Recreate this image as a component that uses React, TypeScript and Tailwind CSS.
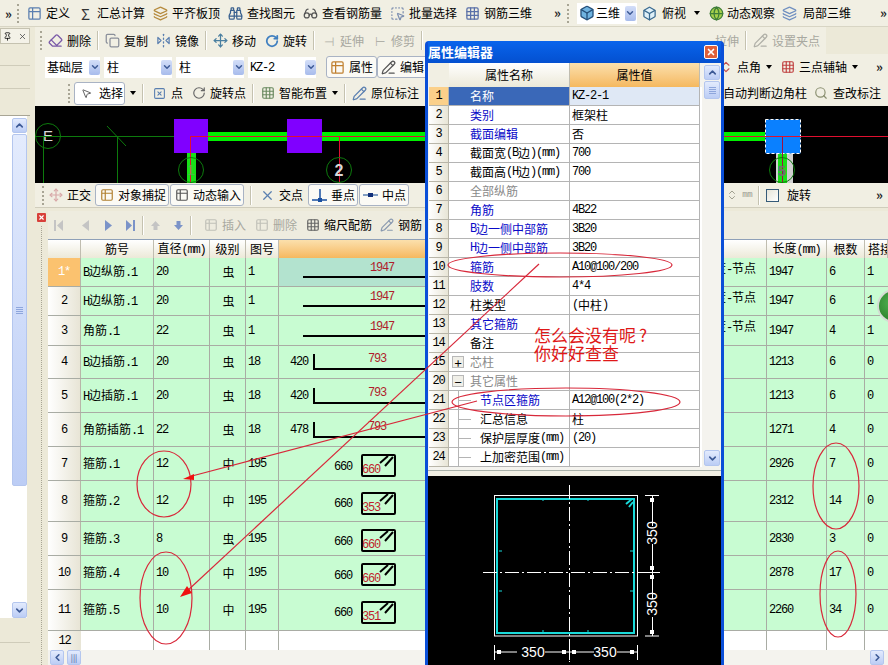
import type { ReactNode } from "react";
import {
  Binoculars,
  Box,
  ChevronDown,
  ChevronLeft,
  ChevronRight,
  ChevronUp,
  ChevronsUpDown,
  Copy,
  Eraser,
  FlipHorizontal2,
  Glasses,
  Globe,
  Grid3x3,
  Layers,
  MousePointer2,
  Move,
  PencilLine,
  Pin,
  RotateCw,
  Search,
  SquareDashedMousePointer,
  SquareX,
  Table2,
  X,
} from "lucide-react";

// ascii runs get the narrow mono look, cjk stays on the cjk font
const T = ({ s }: { s: string }) => (
  <>
    {s.split(/([\x00-\x7f]+)/).map((p, i) =>
      /^[\x00-\x7f]+$/.test(p) ? (
        <span key={i} className="[font-family:'Liberation_Mono',monospace] tracking-[-1.2px]">
          {p}
        </span>
      ) : (
        <span key={i}>{p}</span>
      )
    )}
  </>
);

const Grip = () => (
  <div className="mx-[3px] h-[19px] w-[2px] shrink-0 border-l-2 border-dotted border-[#a8a595]" />
);
const Sep = () => <div className="mx-[6px] h-[19px] w-[2px] shrink-0 border-l border-r border-l-[#c5c2b0] border-r-white" />;
const More = () => <span className="shrink-0 text-[13px] font-bold leading-none text-[#222]">»</span>;
const Caret = ({ className }: { className?: string }) => (
  <span className={`h-0 w-0 shrink-0 border-x-[3px] border-t-[4px] border-x-transparent border-t-black ${className ?? "ml-[5px]"}`} />
);

const ComboArrow = () => (
  <span className="flex h-[15px] w-[11px] shrink-0 items-center justify-center rounded-[2px] bg-gradient-to-b from-[#d3def8] to-[#a8bcec]">
    <ChevronDown size={10} strokeWidth={3.5} className="text-[#3d5a96]" />
  </span>
);

const Tool = ({
  icon,
  label,
  gray,
  className,
}: {
  icon: ReactNode;
  label: string;
  gray?: boolean;
  className?: string;
}) => (
  <div className={`flex shrink-0 items-center gap-[4px] ${gray ? "text-[#a8a8a0]" : "text-black"} ${className ?? ""}`}>
    <span className="flex h-[16px] w-[15px] shrink-0 items-center justify-center">{icon}</span>
    <span className="whitespace-nowrap">{label}</span>
  </div>
);

const Pressed = ({ icon, label, className }: { icon: ReactNode; label: string; className?: string }) => (
  <div className={`flex h-[22px] shrink-0 items-center gap-[4px] rounded-[3px] border border-[#a9b3c4] bg-[#fbfaf5] px-[3px] ${className ?? ""}`}>
    <span className="flex h-[16px] w-[15px] shrink-0 items-center justify-center">{icon}</span>
    <span className="whitespace-nowrap">{label}</span>
  </div>
);

const Combo = ({ label, w, labelCls }: { label: string; w: string; labelCls?: string }) => (
  <div className={`flex h-[21px] shrink-0 items-center justify-between bg-white pl-[2px] ${w}`}>
    <span className={labelCls}>
      <T s={label} />
    </span>
    <ComboArrow />
  </div>
);

const ScrollBtn = ({ children, className }: { children: ReactNode; className?: string }) => (
  <div className={`flex items-center justify-center rounded-[2px] border border-[#b4c6ee] bg-gradient-to-b from-[#e3ebfd] to-[#bccdf5] text-[#3d5a96] ${className ?? ""}`}>
    {children}
  </div>
);

const Lines = () => (
  <div className="flex flex-col gap-[1px]">
    <span className="h-[1px] w-[7px] bg-[#8ea6dc]" />
    <span className="h-[1px] w-[7px] bg-[#8ea6dc]" />
    <span className="h-[1px] w-[7px] bg-[#8ea6dc]" />
    <span className="h-[1px] w-[7px] bg-[#8ea6dc]" />
  </div>
);

const TopBar = () => (
  <div className="flex h-[27px] shrink-0 items-center border-b border-[#d8d5c4] bg-[#f1efe3] pl-[5px]">
    <More />
    <div className="ml-[2px] mr-[5px]"><Grip /></div>
    <div className="flex items-center gap-2">
      <Tool icon={<Table2 size={15} className="text-[#5a7fb0]" />} label="定义" />
      <Tool icon={<span className="text-[15px] leading-none text-[#333]">Σ</span>} label="汇总计算" />
      <Tool icon={<Layers size={15} className="text-[#b58a3c]" />} label="平齐板顶" />
      <Tool icon={<Binoculars size={15} className="text-[#38608f]" />} label="查找图元" />
      <Tool icon={<Glasses size={15} className="text-[#555]" />} label="查看钢筋量" />
      <Tool icon={<SquareDashedMousePointer size={15} className="text-[#7d8fb0]" />} label="批量选择" />
      <Tool icon={<Grid3x3 size={15} className="text-[#5a70a8]" />} label="钢筋三维" />
    </div>
    <div className="ml-[22px]"><More /></div>
    <div className="ml-[3px] mr-[1px]"><Grip /></div>
    <div className="ml-[4px] flex h-[21px] items-center bg-white pl-[2px] pr-[1px]">
      <Box size={16} fill="#6fb3e0" className="text-[#25507a]" />
      <span className="ml-[1px] mr-[5px]">三维</span>
      <ComboArrow />
    </div>
    <Box size={15} fill="#dff0f8" className="ml-[5px] text-[#3a6a90]" />
    <span className="ml-[5px]">俯视</span>
    <Caret className="ml-[8px]" />
    <Globe size={15} fill="#a6d04a" className="ml-[9px] text-[#3f7d3a]" />
    <span className="ml-[3px] whitespace-nowrap">动态观察</span>
    <Layers size={15} className="ml-[7px] text-[#6f8fc0]" />
    <span className="ml-[6px] whitespace-nowrap">局部三维</span>
    <div className="ml-[29px]"><More /></div>
  </div>
);

const EditBar = () => (
  <div className="flex h-[27px] shrink-0 items-center">
    <div className="flex h-full w-[791px] items-center bg-[#f1efe3] pl-[2px]">
      <Grip />
      <div className="ml-[3px] flex items-center">
        <Tool icon={<Eraser size={15} className="text-[#7a5aa8]" />} label="删除" />
        <Sep />
        <Tool icon={<Copy size={15} className="text-[#8a8f9a]" />} label="复制" />
        <Tool className="ml-2" icon={<FlipHorizontal2 size={15} className="text-[#5a7fb0]" />} label="镜像" />
        <Sep />
        <Tool icon={<Move size={15} className="text-[#4a7fa0]" />} label="移动" />
        <Tool className="ml-2" icon={<RotateCw size={14} strokeWidth={3} className="text-[#3f7fc0]" />} label="旋转" />
        <Sep />
        <Tool gray icon={<span className="text-[#b0b0a8]">⊣</span>} label="延伸" />
        <Tool gray className="ml-2" icon={<span className="text-[#b0b0a8]">⊢</span>} label="修剪" />
        <Sep />
      </div>
      <div className="ml-auto flex items-center">
        <span className="text-[#a8a8a0]">拉伸</span>
        <Sep />
        <Tool gray icon={<PencilLine size={15} className="text-[#b0b0a8]" />} label="设置夹点" className="mr-[6px]" />
      </div>
    </div>
  </div>
);

const PropBar = () => (
  <div className="flex h-[26px] shrink-0 items-center justify-between bg-[#f1efe3]">
    <div className="flex items-center gap-[4px] pl-[10px]">
      <Combo label="基础层" w="w-[55px]" />
      <Combo label="柱" w="w-[68px]" labelCls="ml-[1px]" />
      <Combo label="柱" w="w-[68px]" labelCls="ml-[1px]" />
      <Combo label="KZ-2" w="w-[68px]" />
      <div className="ml-[1px]"><Sep /></div>
      <Pressed className="-ml-[13px]" icon={<Table2 size={15} className="text-[#c08030]" />} label="属性" />
      <Pressed className="-ml-[4px]" icon={<PencilLine size={15} className="text-[#555]" />} label="编辑" />
    </div>
    <div className="flex items-center pr-[5px]">
      <Tool icon={<ChevronsUpDown size={14} className="text-[#c05050]" />} label="点角" />
      <Caret />
      <Tool className="ml-[8px]" icon={<Grid3x3 size={14} className="text-[#c04040]" />} label="三点辅轴" />
      <Caret />
      <div className="ml-[18px]"><More /></div>
    </div>
  </div>
);

const DrawBar = () => (
  <div className="flex h-[26px] shrink-0 items-center justify-between bg-[#f1efe3] pl-[30px]">
    <div className="flex items-center">
      <Grip />
      <div className="ml-[1px] flex h-[23px] w-[51px] items-center gap-[7px] rounded-[3px] border border-[#a9b3c4] bg-white pl-[6px]">
        <MousePointer2 size={11} className="text-[#555]" />
        <span>选择</span>
      </div>
      <Caret />
      <Sep />
      <Tool className="ml-[2px]" icon={<SquareX size={13} className="text-[#5a7fb0]" />} label="点" />
      <Tool className="ml-[8px]" icon={<RotateCw size={14} className="text-[#666]" />} label="旋转点" />
      <Sep />
      <Tool icon={<Grid3x3 size={14} className="text-[#6a8a60]" />} label="智能布置" />
      <Caret />
      <Sep />
      <Tool icon={<PencilLine size={15} className="text-[#5a7fb0]" />} label="原位标注" />
      <Sep />
    </div>
    <div className="flex items-center pr-[7px]">
      <span className="whitespace-nowrap">自动判断边角柱</span>
      <Tool className="ml-[7px]" icon={<Search size={14} className="text-[#8a8f70]" />} label="查改标注" />
    </div>
  </div>
);

const CadView = () => (
  <div className="h-[77px] shrink-0 bg-black">
    <svg width="853" height="77" viewBox="35 106 853 77">
      <circle cx="48" cy="136" r="12.5" fill="none" stroke="#0d7a0d" />
      <text x="48" y="141" textAnchor="middle" fontSize="15" fill="#d8d8d8" fontFamily="Liberation Sans">E</text>
      <line x1="35" y1="136.5" x2="190" y2="136.5" stroke="#0d7a0d" />
      <line x1="43.5" y1="136" x2="43.5" y2="183" stroke="#0d7a0d" />
      <line x1="117.5" y1="136" x2="117.5" y2="183" stroke="#0d7a0d" />
      <line x1="107" y1="126" x2="126" y2="146" stroke="#0d7a0d" />
      <rect x="187" y="153" width="9" height="30" fill="#18e018" />
      <rect x="174" y="119" width="34" height="34" fill="#8000ff" />
      <rect x="287" y="119" width="35" height="34" fill="#8000ff" />
      <rect x="208" y="132" width="79" height="9" fill="#00f000" />
      <rect x="322" y="132" width="110" height="9" fill="#00f000" />
      <rect x="700" y="132" width="65" height="9" fill="#00f000" />
      <line x1="190" y1="136.5" x2="430" y2="136.5" stroke="#e01030" />
      <line x1="190.5" y1="137" x2="190.5" y2="183" stroke="#e01030" />
      <line x1="339.5" y1="137" x2="339.5" y2="183" stroke="#e01030" />
      <circle cx="191" cy="170" r="12.5" fill="none" stroke="#0d7a0d" />
      <text x="191" y="175" textAnchor="middle" fontSize="15" fill="#50b050" fontFamily="Liberation Sans">1</text>
      <circle cx="339" cy="170" r="12.5" fill="none" stroke="#0d7a0d" />
      <text x="339" y="176" textAnchor="middle" fontSize="16" fontWeight="bold" fill="#d8d8d8" fontFamily="Liberation Sans">2</text>
      <rect x="776" y="153" width="17" height="30" fill="#d0d0d0" />
      <rect x="778" y="153" width="9" height="30" fill="#18e018" />
      <rect x="765.5" y="119.5" width="35" height="34" fill="#0a80ff" stroke="#ffffff" strokeDasharray="3 2" />
      <line x1="724" y1="136.5" x2="888" y2="136.5" stroke="#e01030" />
      <line x1="782.5" y1="137" x2="782.5" y2="183" stroke="#a01040" />
      <circle cx="782" cy="170" r="12.5" fill="none" stroke="#0d7a0d" />
      <text x="782" y="176" textAnchor="middle" fontSize="15" fontWeight="bold" fill="#707070" fontFamily="Liberation Sans">5</text>
    </svg>
  </div>
);

const SnapBar = () => (
  <div className="flex h-[25px] shrink-0 items-center justify-between border-b border-[#d0cdbc] bg-[#f1efe3] pl-[4px]">
    <div className="flex items-center">
      <Grip />
      <Tool className="ml-[1px]" gray={false} icon={<Move size={14} className="text-[#d8a8a8]" />} label="正交" />
      <Pressed className="ml-[4px] w-[74px]" icon={<Table2 size={14} className="text-[#b08030]" />} label="对象捕捉" />
      <Pressed className="ml-[1px] w-[74px]" icon={<Table2 size={14} className="text-[#555]" />} label="动态输入" />
      <Sep />
      <Tool className="ml-[2px]" icon={<X size={15} className="text-[#5a7fb0]" />} label="交点" />
      <Pressed
        className="ml-[5px] w-[50px]"
        icon={
          <svg width="15" height="14" viewBox="0 0 15 14">
            <path d="M0 12h15M8 1v11" stroke="#1a4fa0" strokeWidth="1.500" />
            <path d="M6 10h4v4H6z" fill="#1a4fa0" />
          </svg>
        }
        label="垂点"
      />
      <Pressed
        className="ml-[1px] w-[50px]"
        icon={
          <svg width="15" height="14" viewBox="0 0 15 14">
            <path d="M0 7h15" stroke="#5a7fb0" strokeWidth="1.500" />
            <path d="M5 5h5v4H5z" fill="#12307a" />
          </svg>
        }
        label="中点"
      />
    </div>
    <div className="flex items-center pr-[5px]">
      <span className="text-[#a8a8a0]"><T s="0" /></span>
      <ChevronsUpDown size={12} className="ml-[5px] text-[#a0a090]" />
      <span className="ml-[4px] text-[9px] tracking-[-0.5px] text-[#9a9a90] [font-family:'Liberation_Mono',monospace]">mm</span>
      <Sep />
      <span className="h-[13px] w-[13px] border border-[#355a78] bg-gradient-to-br from-[#e6e4d8] to-white" />
      <span className="ml-[8px]">旋转</span>
      <div className="ml-[65px]"><More /></div>
    </div>
  </div>
);

const LeftPanel = () => (
  <div className="flex w-[35px] shrink-0 flex-col bg-[#ece9d8]">
    <div className="mt-[1px] flex h-[16px] w-[30px] items-center justify-between border border-[#c5c2b0] bg-[#f4f2e8] px-[2px]">
      <Pin size={9} className="text-black" />
      <X size={9} className="text-[#444]" />
    </div>
    <div className="h-[22px] w-[30px] border-b border-[#cfccba]" />
    <div className="h-[23px] w-[30px] border-b border-[#cfccba]" />
    <div className="h-[27px] w-[30px] border-b border-[#a8a595]" />
    <div className="flex h-[502px] w-[30px] justify-end border-r-[3px] border-[#ece9d8] bg-white pt-[2px]">
      <div className="flex w-[15px] flex-col gap-[1px]">
        <ScrollBtn className="h-[15px]"><ChevronUp size={11} strokeWidth={3.5} /></ScrollBtn>
        <ScrollBtn className="h-[352px]"><Lines /></ScrollBtn>
        <div className="flex-1" />
        <ScrollBtn className="h-[16px]"><ChevronDown size={11} strokeWidth={3.5} /></ScrollBtn>
      </div>
    </div>
    <div className="mt-[4px] h-[21px] w-[30px] border-b border-[#cfccba]" />
  </div>
);

const Nav = ({ d, c }: { d: string; c: string }) => (
  <svg width="11" height="13" viewBox="0 0 11 13"><path d={d} fill={c} /></svg>
);

const GridBar = () => (
  <div className="flex h-[28px] shrink-0 items-center bg-[#eeecdf] pl-[5px] text-[#a8a8a0]">
    <Nav d="M1 1h2v11H1zM10 1v11L4 6.5z" c="#c4c4c4" />
    <div className="ml-[16px]"><Nav d="M9 1v11L2 6.5z" c="#c4c4c4" /></div>
    <div className="ml-[12px]"><Nav d="M2 1v11l7-5.5z" c="#7b93c8" /></div>
    <div className="ml-[11px]"><Nav d="M1 1v11l6-5.5zM8 1h2v11H8z" c="#7b93c8" /></div>
    <Sep />
    <Nav d="M5.5 2 10 7H7.500v4h-4V7H1z" c="#c4c4c4" />
    <div className="ml-[12px]"><Nav d="M3.500 2h4v4H10l-4.500 5L1 6h2.500z" c="#7b93c8" /></div>
    <Sep />
    <Tool gray icon={<Table2 size={14} className="text-[#c0c0b8]" />} label="插入" className="ml-[5px]" />
    <Tool gray icon={<Table2 size={14} className="text-[#c0c0b8]" />} label="删除" className="ml-[8px]" />
    <Tool icon={<Grid3x3 size={14} className="text-[#666]" />} label="缩尺配筋" className="ml-[8px]" />
    <Tool icon={<PencilLine size={14} className="text-[#8a9ab0]" />} label="钢筋" className="ml-[7px]" />
  </div>
);

const colsCls =
  "grid grid-cols-[33px_73px_56px_36px_33px_321px_167px_60px_38px_23px]";

const Th = ({ s, orange, left }: { s: string; orange?: boolean; left?: boolean }) => (
  <div
    className={`flex items-center overflow-hidden border-r border-[#c0bdb0] bg-gradient-to-b ${left ? "justify-start pl-[3px]" : "justify-center"} ${
      orange ? "from-[#fbe0ac] to-[#f5b85e]" : "from-white to-[#ece9d8]"
    }`}
  >
    <span className="whitespace-nowrap"><T s={s} /></span>
  </div>
);

type Shape =
  | { kind: "bar"; v: string; active?: boolean }
  | { kind: "hook"; left: string; v: string }
  | { kind: "box"; v: string };

type Row = {
  n: string;
  name: string;
  d: string;
  g: string;
  fig: string;
  shape: Shape;
  node?: boolean;
  len: string;
  cnt: string;
  lap: string;
  h: string;
};

const rows: Row[] = [
  { n: "1*", name: "B边纵筋.1", d: "20", g: "虫", fig: "1", shape: { kind: "bar", v: "1947", active: true }, node: true, len: "1947", cnt: "6", lap: "1", h: "h-[29px]" },
  { n: "2", name: "H边纵筋.1", d: "20", g: "虫", fig: "1", shape: { kind: "bar", v: "1947" }, node: true, len: "1947", cnt: "6", lap: "1", h: "h-[29px]" },
  { n: "3", name: "角筋.1", d: "22", g: "虫", fig: "1", shape: { kind: "bar", v: "1947" }, node: true, len: "1947", cnt: "4", lap: "1", h: "h-[30px]" },
  { n: "4", name: "B边插筋.1", d: "20", g: "虫", fig: "18", shape: { kind: "hook", left: "420", v: "793" }, len: "1213", cnt: "6", lap: "0", h: "h-[33px]" },
  { n: "5", name: "H边插筋.1", d: "20", g: "虫", fig: "18", shape: { kind: "hook", left: "420", v: "793" }, len: "1213", cnt: "6", lap: "0", h: "h-[34px]" },
  { n: "6", name: "角筋插筋.1", d: "22", g: "虫", fig: "18", shape: { kind: "hook", left: "478", v: "793" }, len: "1271", cnt: "4", lap: "0", h: "h-[34px]" },
  { n: "7", name: "箍筋.1", d: "12", g: "中", fig: "195", shape: { kind: "box", v: "660" }, len: "2926", cnt: "7", lap: "0", h: "h-[34px]" },
  { n: "8", name: "箍筋.2", d: "12", g: "中", fig: "195", shape: { kind: "box", v: "353" }, len: "2312", cnt: "14", lap: "0", h: "h-[41px]" },
  { n: "9", name: "箍筋.3", d: "8", g: "虫", fig: "195", shape: { kind: "box", v: "660" }, len: "2830", cnt: "3", lap: "0", h: "h-[34px]" },
  { n: "10", name: "箍筋.4", d: "10", g: "中", fig: "195", shape: { kind: "box", v: "660" }, len: "2878", cnt: "17", lap: "0", h: "h-[34px]" },
  { n: "11", name: "箍筋.5", d: "10", g: "中", fig: "195", shape: { kind: "box", v: "351" }, len: "2260", cnt: "34", lap: "0", h: "h-[41px]" },
];

const ShapeCell = ({ shape }: { shape: Shape }) => {
  if (shape.kind === "bar")
    return (
      <div className={`flex h-full flex-col justify-end pb-[8px] pl-[24px] ${shape.active ? "bg-[#b3e3cf]" : ""}`}>
        <div className="mb-[1px] pl-[67px] leading-[13px] text-[#b01c2c]"><T s={shape.v} /></div>
        <div className="h-[2px] bg-black" />
      </div>
    );
  if (shape.kind === "hook")
    return (
      <div className="flex h-full items-end pb-[8px] pl-[11px]">
        <div className="mb-[1px] w-[23px] leading-[14px]"><T s={shape.left} /></div>
        <div className="h-[16px] flex-1 border-b-[2px] border-l-[2px] border-black pl-[53px] leading-[6px] text-[#b01c2c]">
          <T s={shape.v} />
        </div>
      </div>
    );
  return (
    <div className="flex h-full items-center gap-[9px] pl-[55px]">
      <span className="translate-y-[2px]"><T s="660" /></span>
      <div className="relative h-[23px] w-[35px] translate-y-[2px] rounded-[2px] border-[2px] border-black">
        <span className="absolute -left-[1px] bottom-[-2px] leading-[14px] text-[#c01c2c]"><T s={shape.v} /></span>
        <svg className="absolute right-[0px] top-[0px]" width="15" height="12" viewBox="0 0 15 12">
          <path d="M1 7 9 0M6 10 14 1" stroke="#000" strokeWidth="2" fill="none" />
        </svg>
      </div>
    </div>
  );
};

const Td = ({ children, className }: { children?: ReactNode; className?: string }) => (
  <div className={`flex items-center overflow-hidden border-r border-[#a9aca4] pl-[2px] ${className ?? ""}`}>{children}</div>
);

const RebarGrid = () => (
  <div className="relative flex-1 overflow-hidden bg-white">
    <div className={`${colsCls} h-[19px] border-t border-[#8ea0b8]`}>
      <Th s="" />
      <Th s="筋号" />
      <Th s="直径(mm)" />
      <Th s="级别" />
      <Th s="图号" />
      <Th s="图形" orange />
      <Th s="公式" />
      <Th s="长度(mm)" />
      <Th s="根数" />
      <Th s="搭接" left />
    </div>
    {rows.map((r) => (
      <div key={r.n} className={`${colsCls} ${r.h} border-b border-[#a9aca4] bg-[#c8fcd2]`}>
        <div
          className={`flex items-center justify-center border-r border-[#b8b5a8] ${
            r.n === "1*" ? "bg-[#fbc26f] text-white" : "bg-gradient-to-r from-white to-[#e8e5d6]"
          }`}
        >
          <T s={r.n} />
        </div>
        <Td><span className="whitespace-nowrap"><T s={r.name} /></span></Td>
        <Td><T s={r.d} /></Td>
        <Td className="justify-center pl-0">{r.g}</Td>
        <Td><T s={r.fig} /></Td>
        <div className="border-r border-[#a9aca4]"><ShapeCell shape={r.shape} /></div>
        <Td className="items-start justify-end pr-[10px] pt-[3px]">
          {r.node && <span className="whitespace-nowrap">度<T s="-" />节点</span>}
        </Td>
        <Td><T s={r.len} /></Td>
        <Td><T s={r.cnt} /></Td>
        <Td className="border-r-0"><T s={r.lap} /></Td>
      </div>
    ))}
    <div className={`${colsCls} h-[19px]`}>
      <div className="flex items-center justify-center bg-gradient-to-r from-white to-[#e8e5d6]"><T s="12" /></div>
      <div className="border-r border-[#a9aca4]" />
      <div className="border-r border-[#a9aca4]" />
      <div className="border-r border-[#a9aca4]" />
      <div className="border-r border-[#a9aca4]" />
      <div className="border-r border-[#a9aca4]" />
      <div className="border-r border-[#a9aca4]" />
      <div className="border-r border-[#a9aca4]" />
      <div className="border-r border-[#a9aca4]" />
      <div />
    </div>
    <div className="flex h-[15px] items-center gap-[3px] bg-[#f4f3ee] pl-[2px] pr-[4px]">
      <ScrollBtn className="h-[15px] w-[14px]"><ChevronLeft size={11} strokeWidth={3.5} /></ScrollBtn>
      <ScrollBtn className="h-[15px] w-[14px]"><span className="text-[8px] leading-none">|||</span></ScrollBtn>
      <ScrollBtn className="ml-auto h-[15px] w-[14px]"><ChevronRight size={11} strokeWidth={3.5} /></ScrollBtn>
    </div>
  </div>
);

const BottomPanel = () => (
  <div className="flex min-h-0 flex-1 bg-[#ece9d8] pt-[3px]">
    <div className="flex w-[13px] shrink-0 flex-col items-center pt-[2px]">
      <span className="flex h-[9px] w-[9px] items-center justify-center rounded-[1px] bg-[#d8403a]">
        <X size={7} strokeWidth={4} className="text-white" />
      </span>
      <div className="mt-[4px] flex-1 border-l border-dotted border-[#a8a595]" />
    </div>
    <div className="flex min-w-0 flex-1 flex-col">
      <GridBar />
      <RebarGrid />
    </div>
  </div>
);

type PropRow = {
  n: string;
  name: string;
  val?: string;
  tone: "blue" | "black" | "gray";
  tree?: "plus" | "minus" | "line";
};

const props: PropRow[] = [
  { n: "1", name: "名称", val: "KZ-2-1", tone: "black" },
  { n: "2", name: "类别", val: "框架柱", tone: "blue" },
  { n: "3", name: "截面编辑", val: "否", tone: "blue" },
  { n: "4", name: "截面宽(B边)(mm)", val: "700", tone: "black" },
  { n: "5", name: "截面高(H边)(mm)", val: "700", tone: "black" },
  { n: "6", name: "全部纵筋", tone: "gray" },
  { n: "7", name: "角筋", val: "4B22", tone: "blue" },
  { n: "8", name: "B边一侧中部筋", val: "3B20", tone: "blue" },
  { n: "9", name: "H边一侧中部筋", val: "3B20", tone: "blue" },
  { n: "10", name: "箍筋", val: "A10@100/200", tone: "blue" },
  { n: "11", name: "肢数", val: "4*4", tone: "blue" },
  { n: "12", name: "柱类型", val: "(中柱)", tone: "black" },
  { n: "13", name: "其它箍筋", tone: "blue" },
  { n: "14", name: "备注", tone: "black" },
  { n: "15", name: "芯柱", tone: "gray", tree: "plus" },
  { n: "20", name: "其它属性", tone: "gray", tree: "minus" },
  { n: "21", name: "节点区箍筋", val: "A12@100(2*2)", tone: "blue", tree: "line" },
  { n: "22", name: "汇总信息", val: "柱", tone: "black", tree: "line" },
  { n: "23", name: "保护层厚度(mm)", val: "(20)", tone: "black", tree: "line" },
  { n: "24", name: "上加密范围(mm)", tone: "black", tree: "line" },
];

const toneCls = { blue: "text-[#0a0ac8]", black: "text-black", gray: "text-[#8a8a8a]" };

const SectionDrawing = () => (
  <svg width="292" height="189" viewBox="428 476 292 189">
    <rect x="494.500" y="495.500" width="143" height="140.500" fill="none" stroke="#fff" />
    <rect x="497" y="499" width="137" height="134" fill="none" stroke="#19d8d8" strokeWidth="2" />
    <path d="M626 504l6-5M629 507l4-5" stroke="#19d8d8" strokeWidth="2" />
    <path d="M499 551h3M499 591h3M630 551h3M630 591h3M543 630v3M588 630v3M543 499v2M588 499v2" stroke="#19d8d8" />
    <line x1="569.500" y1="485" x2="569.500" y2="662" stroke="#fff" strokeDasharray="14 3 2 3" />
    <line x1="483" y1="572.500" x2="660" y2="572.500" stroke="#fff" strokeDasharray="14 3 2 3" />
    <path d="M645 495.500h14M645 572.500h14M645 636h14M652.500 496v30M652.500 544v55M652.500 617v19" stroke="#fff" />
    <path d="M494.500 645v15M569.500 645v15M637.500 645v15M495 652h22M545 652h49M617 652h20" stroke="#fff" />
    <path d="M650 498h4v4h-4zM650 566h4v4h-4zM650 575h4v4h-4zM650 630h4v4h-4zM497 650h4v4h-4zM562 650h4v4h-4zM572 650h4v4h-4zM630 650h4v4h-4z" fill="#fff" />
    <g fill="#fff" fontSize="14" fontFamily="Liberation Sans" textAnchor="middle">
      <text x="533" y="657">350</text>
      <text x="605" y="657">350</text>
      <text transform="translate(657 533) rotate(-90)">350</text>
      <text transform="translate(657 604) rotate(-90)">350</text>
    </g>
  </svg>
);

const PropEditor = () => (
  <div className="absolute left-[425px] top-[41px] flex h-[624px] w-[299px] flex-col rounded-t-[4px] bg-[#0a4fd8] px-[3px] pb-0">
    <div className="flex h-[22px] shrink-0 items-center justify-between bg-gradient-to-b from-[#0a64ec] to-[#0450d0] pr-[3px]">
      <span className="text-[13px] font-bold text-white">属性编辑器</span>
      <span className="flex h-[14px] w-[14px] items-center justify-center rounded-[2px] border border-white bg-[#e0603a]">
        <X size={10} strokeWidth={4} className="text-white" />
      </span>
    </div>
    <div className="flex h-[407px] shrink-0 bg-[#f4f3ee]">
      <div className="w-[274px] pl-[1px]">
        <div className="grid h-[24px] grid-cols-[20px_121px_130px]">
          <div className="bg-[#f1efe3]" />
          <Th s="属性名称" />
          <Th s="属性值" orange />
        </div>
        {props.map((p) => (
          <div key={p.n} className="grid h-[19px] grid-cols-[20px_121px_130px] bg-white">
            <div className={`flex items-center justify-center border-b border-r border-[#b8b5a8] ${p.n === "1" ? "bg-[#fbd08a]" : "bg-gradient-to-r from-white to-[#e8e5d6]"}`}>
              <T s={p.n} />
            </div>
            <div className={`relative flex items-center whitespace-nowrap border-b border-r border-[#b4b4b4] ${p.n === "1" ? "bg-[#3a68b8] pl-[21px] text-white" : toneCls[p.tone]} ${p.tree === "line" ? "pl-[31px]" : "pl-[21px]"}`}>
              {(p.tree === "plus" || p.tree === "minus") && (
                <span className="absolute left-[3px] top-[3px] flex h-[12px] w-[12px] items-center justify-center border border-[#b8b8b8] bg-[#f0efe8] text-[13px] leading-none text-black">
                  {p.tree === "plus" ? "+" : "−"}
                </span>
              )}
              {p.tree === "line" && (
                <span className="absolute left-[9px] top-0 h-full w-[13px] border-l border-[#b4b4b4]">
                  <span className="absolute left-0 top-[9px] h-[1px] w-full bg-[#b4b4b4]" />
                </span>
              )}
              <T s={p.name} />
            </div>
            <div className={`flex items-center border-b border-r border-[#b4b4b4] pl-[2px] ${p.n === "1" ? "bg-[#dfe8f5]" : ""}`}>
              {p.val && <T s={p.val} />}
            </div>
          </div>
        ))}
      </div>
      <div className="ml-[2px] flex w-[16px] flex-col gap-[1px] pt-[2px] pb-[4px]">
        <ScrollBtn className="h-[15px]"><ChevronUp size={11} strokeWidth={3.5} /></ScrollBtn>
        <ScrollBtn className="h-[18px]"><Lines /></ScrollBtn>
        <div className="flex-1" />
        <ScrollBtn className="h-[16px]"><ChevronDown size={11} strokeWidth={3.5} /></ScrollBtn>
      </div>
    </div>
    <div className="h-[6px] shrink-0 border-t border-[#a8b0a8] bg-[#f1efe3]" />
    <div className="min-h-0 flex-1 bg-black"><SectionDrawing /></div>
  </div>
);

// red markup somebody drew on top of the screenshot
const Markup = () => (
  <svg className="pointer-events-none absolute left-0 top-0" width="888" height="665" viewBox="0 0 888 665">
    <g fill="none" stroke="#d8283a" strokeWidth="1.200">
      <ellipse cx="560" cy="265" rx="112" ry="12" />
      <ellipse cx="566" cy="402" rx="114" ry="14" />
      <ellipse cx="164" cy="484" rx="27" ry="33" />
      <ellipse cx="166" cy="598" rx="26" ry="46" />
      <ellipse cx="836" cy="486" rx="23" ry="43" />
      <ellipse cx="838" cy="594" rx="18" ry="43" />
      <line x1="539" y1="264" x2="186" y2="592" />
      <line x1="477" y1="401" x2="192" y2="476" />
    </g>
    <path d="M180 597 187 586 192 593z" fill="#f01010" />
    <path d="M183 479 194 474 194 480z" fill="#f01010" />
  </svg>
);

export default function App() {
  return (
    <div className="relative flex h-[665px] w-[888px] flex-col overflow-hidden bg-[#ece9d8] text-[12px] leading-[14px] text-black [font-family:'Noto_Sans_CJK_SC','Liberation_Sans',sans-serif]">
      <TopBar />
      <div className="flex min-h-0 flex-1">
        <LeftPanel />
        <div className="flex min-w-0 flex-1 flex-col">
          <EditBar />
          <PropBar />
          <DrawBar />
          <CadView />
          <SnapBar />
          <BottomPanel />
        </div>
      </div>
      <PropEditor />
      <div className="absolute left-[877px] top-[289px] h-[34px] w-[34px] rounded-full border-2 border-[#d4dcd4] bg-[radial-gradient(circle_at_40%_40%,#4fb04f,#1d6f1d)]" />
      <Markup />
      <div className="absolute left-[534px] top-[326px] text-[17px] leading-[18px] text-[#e01818]">
        <div>怎么会没有呢<span className="ml-[3px]">?</span></div>
        <div>你好好查查</div>
      </div>
    </div>
  );
}
